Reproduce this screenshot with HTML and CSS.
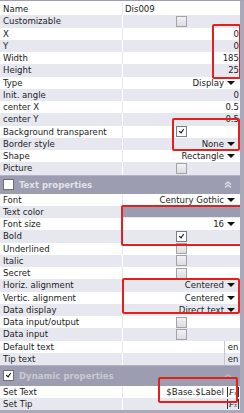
FILE: index.html
```html
<html lang="en">
<head>
    <meta charset="utf-8"/>
    <title>properties</title>
    <link rel="stylesheet" href="styles.css">
</head>
<body>
<div class="panel">
    <div class="section first">
        <div class="row"><span class="label">Name</span><span class="value text">Dis009</span></div>
        <div class="row"><span class="label">Customizable</span><span class="value center"><i class="box"></i></span></div>
        <div class="row"><span class="label">X</span><span class="value num">0</span></div>
        <div class="row"><span class="label">Y</span><span class="value num">0</span></div>
        <div class="row"><span class="label">Width</span><span class="value num">185</span></div>
        <div class="row"><span class="label">Height</span><span class="value num">25</span></div>
        <div class="row"><span class="label">Type</span><span class="value drop">Display<b class="arrow"></b></span></div>
        <div class="row"><span class="label">Init. angle</span><span class="value num">0</span></div>
        <div class="row"><span class="label">center X</span><span class="value num">0.5</span></div>
        <div class="row"><span class="label">center Y</span><span class="value num">0.5</span></div>
        <div class="row"><span class="label">Background transparent</span><span class="value center"><i class="box checked"></i></span></div>
        <div class="row"><span class="label">Border style</span><span class="value drop">None<b class="arrow"></b></span></div>
        <div class="row"><span class="label">Shape</span><span class="value drop">Rectangle<b class="arrow"></b></span></div>
        <div class="row"><span class="label">Picture</span><span class="value center"><i class="box"></i></span></div>
    </div>

    <div class="group text-group">
        <i class="box white"></i>
        <span class="title">Text properties</span>
        <svg class="chevron" width="8" height="7" viewBox="0 0 8 7">
            <polyline points="1,3.5 4,1 7,3.5" fill="none" stroke="#e4e4ec" stroke-width="1.2"/>
            <polyline points="1,6.5 4,4 7,6.5" fill="none" stroke="#e4e4ec" stroke-width="1.2"/>
        </svg>
    </div>

    <div class="section">
        <div class="row"><span class="label">Font</span><span class="value drop">Century Gothic<b class="arrow"></b></span></div>
        <div class="row"><span class="label">Text color</span><span class="value swatch"></span></div>
        <div class="row"><span class="label">Font size</span><span class="value drop">16<b class="arrow"></b></span></div>
        <div class="row"><span class="label">Bold</span><span class="value center"><i class="box checked"></i></span></div>
        <div class="row"><span class="label">Underlined</span><span class="value center"><i class="box"></i></span></div>
        <div class="row"><span class="label">Italic</span><span class="value center"><i class="box"></i></span></div>
        <div class="row"><span class="label">Secret</span><span class="value center"><i class="box"></i></span></div>
        <div class="row"><span class="label">Horiz. alignment</span><span class="value drop">Centered<b class="arrow"></b></span></div>
        <div class="row"><span class="label">Vertic. alignment</span><span class="value drop">Centered<b class="arrow"></b></span></div>
        <div class="row"><span class="label">Data display</span><span class="value drop">Direct text<b class="arrow"></b></span></div>
        <div class="row"><span class="label">Data input/output</span><span class="value center"><i class="box"></i></span></div>
        <div class="row"><span class="label">Data input</span><span class="value center"><i class="box"></i></span></div>
        <div class="row"><span class="label">Default text</span><span class="value lang"><span class="lang-tag">en</span></span></div>
        <div class="row"><span class="label">Tip text</span><span class="value lang"><span class="lang-tag">en</span></span></div>
    </div>

    <div class="group dyn-group">
        <i class="box white checked"></i>
        <span class="title">Dynamic properties</span>
        <svg class="chevron" width="8" height="7" viewBox="0 0 8 7">
            <polyline points="1,5 4,2.5 7,5" fill="none" stroke="#b9b9c8" stroke-width="1.2"/>
        </svg>
    </div>

    <div class="section">
        <div class="row"><span class="label">Set Text</span><span class="value expr">$Base.$Label<span class="fx">F<sub>x</sub></span></span></div>
        <div class="row"><span class="label">Set Tip</span><span class="value expr"><span class="fx">F<sub>x</sub></span></span></div>
    </div>

    <!-- red marks drawn over the screenshot -->
    <div class="mark" style="left:212px;top:23px;width:29px;height:55px"></div>
    <div class="mark" style="left:172px;top:117px;width:68px;height:33px"></div>
    <div class="mark" style="left:121px;top:204px;width:121px;height:41px"></div>
    <div class="mark" style="left:122px;top:277px;width:118px;height:36px"></div>
    <div class="mark" style="left:158px;top:376px;width:80px;height:26px"></div>
</div>
</body>
</html>
```

FILE: styles.css
```css
html, body {
    margin: 0;
    padding: 0;
    background: #a9a9ba;
}

.panel {
    position: relative;
    width: 240px;
    height: 409px;
    border-top: 1px solid #9e9eb0;
    border-right: 4px solid #a9a9ba;
    background: #fff;
    font-family: "DejaVu Sans Condensed", "DejaVu Sans", "Liberation Sans", sans-serif;
    font-size: 9.5px;
    color: #1c1c1c;
    overflow: hidden;
}

.section.first {
    padding-top: 2px;
}

.row {
    display: grid;
    grid-template-columns: 122px 1fr;
    height: 12.25px;
    line-height: 12.25px;
    background: #fff;
}

.row:nth-child(even) {
    background: #e7e8ef;
}

.label {
    padding-left: 3px;
    white-space: nowrap;
    overflow: hidden;
}

.value {
    display: flex;
    align-items: center;
    border-left: 1px solid #e7e8ef;
    white-space: nowrap;
    overflow: hidden;
}

.row:nth-child(even) .value {
    border-left-color: #fff;
}

.value.text {
    padding-left: 2px;
}

.value.num {
    justify-content: flex-end;
    padding-right: 1px;
}

.value.center {
    justify-content: center;
}

.value.drop {
    justify-content: flex-end;
    padding-right: 5px;
}

.arrow {
    width: 0;
    height: 0;
    margin-left: 3px;
    border-left: 4px solid transparent;
    border-right: 4px solid transparent;
    border-top: 4px solid #111;
}

.value.swatch {
    background: #9c9cb1;
    margin: 1px 0;
}

.value.lang {
    justify-content: flex-end;
}

.lang-tag {
    width: 14px;
    padding-left: 1px;
    border-left: 1px solid #c8c8d2;
    text-align: center;
}

.value.expr {
    justify-content: flex-end;
    padding-right: 1px;
}

.fx {
    display: inline-block;
    height: 10px;
    line-height: 10px;
    margin-left: 3px;
    padding: 0 1px;
    border-left: 1px solid #333;
    border-right: 1px solid #333;
    font-family: "Liberation Serif", serif;
    font-style: italic;
    font-size: 9px;
}

.fx sub {
    font-size: 6px;
    vertical-align: 0;
}

.box {
    display: block;
    box-sizing: border-box;
    width: 11px;
    height: 11px;
    border: 1px solid #a2a2a8;
    background: linear-gradient(#f2f2f4, #dcdce2);
    position: relative;
}

.box.checked {
    background: #fafafa;
    border-color: #7c7c84;
}

.box.checked::after {
    content: "";
    position: absolute;
    left: 3px;
    top: 1px;
    width: 2px;
    height: 4px;
    border-right: 1.5px solid #111;
    border-bottom: 1.5px solid #111;
    transform: rotate(35deg);
}

.group {
    display: flex;
    align-items: center;
    padding: 0 3px;
    background: #9d9db1;
    border-top: 1px solid #b3b3c3;
}

.text-group {
    height: 18px;
}

.dyn-group {
    height: 19.5px;
}

.box.white {
    background: #fff;
    border-color: #6e6e7a;
}

.title {
    margin-left: 5px;
    font-weight: bold;
    font-size: 9.5px;
    color: #e2e2ea;
}

.dyn-group .title {
    color: #c9c9d6;
}

.chevron {
    margin-left: auto;
    margin-right: 5px;
}

.mark {
    position: absolute;
    box-sizing: border-box;
    border: 2px solid #e3201b;
    border-radius: 2px;
}
```
